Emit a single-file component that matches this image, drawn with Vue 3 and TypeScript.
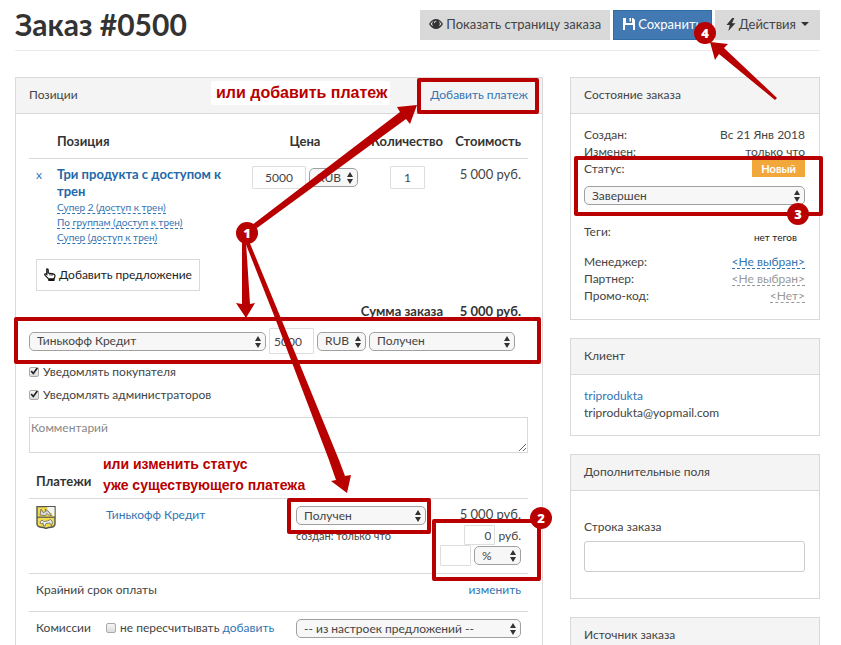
<script setup lang="ts">
import { ref } from 'vue'

interface Marker {
  n: number
  x: number
  y: number
}

interface Frame {
  x: number
  y: number
  w: number
  h: number
}

const offers: string[] = [
  'Супер 2 (доступ к трен)',
  'По группам (доступ к трен)',
  'Супер (доступ к трен)',
]

const frames: Frame[] = [
  { x: 419, y: 80, w: 118, h: 32 },
  { x: 16, y: 319, w: 523, h: 43 },
  { x: 289, y: 500, w: 140, h: 32 },
  { x: 434, y: 521, w: 105, h: 58 },
  { x: 576, y: 158, w: 245, h: 56 },
]

const arrows: string[] = [
  '252,225 400,112 397,107 417,105 410,124 406,119 257,228',
  '242,242 246,242 250,304 255,303 246,318 236,303 242,304',
  '245,242 249,241 280,316 339,460 345,476 351,475 347,493 331,481 336,480 329,460 275,318',
  '710,42 728,44 724,48 777,98 775,100 719,54 715,60',
]

const markers: Marker[] = [
  { n: 1, x: 247, y: 233 },
  { n: 2, x: 541, y: 518 },
  { n: 3, x: 798, y: 214 },
  { n: 4, x: 705, y: 33 },
]

const price = ref('5000')
const quantity = ref('1')
const paymentSum = ref('5000')
const fee = ref('0')
const feePercent = ref('')
const orderLine = ref('')
const comment = ref('')
const notifyBuyer = ref(true)
const notifyAdmins = ref(true)
const keepFees = ref(false)
</script>

<template>
  <div class="page">
    <header class="top">
      <h1>Заказ #0500</h1>
      <div class="actions">
        <button type="button" class="btn">
          <svg width="14" height="12" viewBox="0 0 14 12" aria-hidden="true">
            <path d="M0 6C2 2.600 4.300 1 7 1s5 1.600 7 5c-2 3.400-4.300 5-7 5S2 9.400 0 6Z" fill="#333" />
            <path d="M1.500 6C2.300 4.600 3.300 3.500 4.500 2.900a4 4 0 0 0 0 5.600C3.300 8 2.300 7.200 1.500 6Zm11 0c-.8-1.400-1.800-2.500-3-3.100a4 4 0 0 1 0 5.600c1.200-.5 2.200-1.300 3-2.500Z" fill="#d9d9d9" />
            <path d="M6.900 2.700c-1.100 0-1.900.9-1.900 2 0 .5.600.7.800.2.200-.8.600-1.100 1.200-1.300.6-.2.500-.9-.1-.9Z" fill="#d9d9d9" />
          </svg>
          Показать страницу заказа
        </button>
        <button type="button" class="btn primary">
          <svg width="12" height="12" viewBox="0 0 12 12" aria-hidden="true">
            <path d="M0 0h3v5h6V0h1l2 2v10H10V7H2v5H0ZM6.500 0h1.500v3.500H6.500Z" fill="#fff" />
          </svg>
          Сохранить
        </button>
        <button type="button" class="btn wide">
          <svg width="10" height="13" viewBox="0 0 10 13" aria-hidden="true">
            <path d="M6.200 0 .5 7h3.300L2.300 13 9.500 5.300H6L8.300 0Z" fill="#333" />
          </svg>
          Действия
          <span class="caret"></span>
        </button>
      </div>
    </header>

    <div class="columns">
      <main class="panel">
        <div class="panel-head">
          <h2>Позиции</h2>
          <a href="#add-payment">Добавить платеж</a>
        </div>
        <div class="order">
          <table class="items">
            <colgroup>
              <col class="c-del" /><col /><col class="c-price" /><col class="c-qty" /><col class="c-cost" />
            </colgroup>
            <thead>
              <tr>
                <th></th>
                <th class="left">Позиция</th>
                <th>Цена</th>
                <th class="right">Количество</th>
                <th class="right">Стоимость</th>
              </tr>
            </thead>
            <tbody>
              <tr>
                <td><a href="#remove">x</a></td>
                <td>
                  <a href="#offer" class="offer">Три продукта с доступом к трен</a>
                  <ul class="subs">
                    <li v-for="o in offers" :key="o"><a href="#sub">{{ o }}</a></li>
                  </ul>
                </td>
                <td>
                  <div class="price">
                    <input v-model="price" class="box center price-input" aria-label="Цена" />
                    <span class="pick cur">
                      <select aria-label="Валюта"><option>RUB</option></select>
                      <svg class="chev" width="6" height="12" viewBox="0 0 6 12"><path d="M3 0 6 5H0ZM3 12 0 7h6Z" /></svg>
                    </span>
                  </div>
                </td>
                <td class="mid"><input v-model="quantity" class="box center qty-input" aria-label="Количество" /></td>
                <td class="right money">5 000 руб.</td>
              </tr>
            </tbody>
          </table>

          <button type="button" class="add">
            <svg width="12" height="13" viewBox="0 0 12 13" aria-hidden="true">
              <path d="M3 .8c.8 0 1.200.5 1.200 1.200v3l4.800.8c1.200.2 2 .8 2 2 0 1.200-.6 2.200-1 3.200H4.500C3.600 9.500 1.800 8.300.8 7c-.4-.7.400-1.500 1.200-1l.8.6V2c0-.7-.2-1.200.2-1.200Z" fill="#fff" stroke="#111" stroke-width="1.200" />
              <path d="M6 5.500v2M8 5.800v2" stroke="#111" fill="none" />
              <path d="M4.300 10.500h6.200V13H4.300Z" fill="#111" />
            </svg>
            Добавить предложение
          </button>

          <div class="total">
            <b>Сумма заказа</b>
            <b class="sum">5 000 руб.</b>
          </div>

          <div class="pay-form">
            <span class="pick system">
              <select aria-label="Платежная система"><option>Тинькофф Кредит</option></select>
              <svg class="chev" width="6" height="12" viewBox="0 0 6 12"><path d="M3 0 6 5H0ZM3 12 0 7h6Z" /></svg>
            </span>
            <input v-model="paymentSum" class="box pay-input" aria-label="Сумма платежа" />
            <span class="pick cur">
              <select aria-label="Валюта платежа"><option>RUB</option></select>
              <svg class="chev" width="6" height="12" viewBox="0 0 6 12"><path d="M3 0 6 5H0ZM3 12 0 7h6Z" /></svg>
            </span>
            <span class="pick state">
              <select aria-label="Статус платежа"><option>Получен</option></select>
              <svg class="chev" width="6" height="12" viewBox="0 0 6 12"><path d="M3 0 6 5H0ZM3 12 0 7h6Z" /></svg>
            </span>
          </div>

          <div class="checks">
            <label><input v-model="notifyBuyer" type="checkbox" />Уведомлять покупателя</label>
            <label><input v-model="notifyAdmins" type="checkbox" />Уведомлять администраторов</label>
          </div>

          <textarea v-model="comment" placeholder="Комментарий" aria-label="Комментарий"></textarea>

          <table class="payments">
            <colgroup>
              <col class="p-icon" /><col /><col class="p-state" /><col class="p-sum" />
            </colgroup>
            <thead>
              <tr><th colspan="4" class="left">Платежи</th></tr>
            </thead>
            <tbody>
              <tr>
                <td>
                  <svg class="crest" width="20" height="23" viewBox="0 0 20 23" aria-hidden="true">
                    <path d="M1 .5h18v17.500c0 3-3.500 3.500-6.500 3.500L10 22.500 7.500 21.500C4.500 21.500 1 21 1 18Z" fill="#f2dc4e" stroke="#555" stroke-width="1.400" />
                    <path d="M11 1h7.500v9.500l-2-1-1-2.500-2.500-1Z" fill="#f4f4f4" />
                    <path d="m4 9 1-6 2 3.500 3-1L9 3l4 3 2.500 3.500-3-.5L11 7.500 9.500 9.500Z" fill="#ddd" stroke="#666" stroke-width=".8" />
                    <path d="M1 11.200h18" stroke="#555" stroke-width="1.200" />
                    <path d="m4 16 2-2 1.500 1.500 4-.5 3-1.500 2 2.500-1 4-1.500-3-4 .5-1 2.500H7.500l-.5-3-2 1Z" fill="#eee" stroke="#666" stroke-width=".8" />
                  </svg>
                </td>
                <td><a href="#payment">Тинькофф Кредит</a></td>
                <td>
                  <span class="pick fill">
                    <select aria-label="Статус"><option>Получен</option></select>
                    <svg class="chev" width="6" height="12" viewBox="0 0 6 12"><path d="M3 0 6 5H0ZM3 12 0 7h6Z" /></svg>
                  </span>
                  <small>создан: только что</small>
                </td>
                <td class="right money">
                  <div>5 000 руб.</div>
                  <label class="fee"><input v-model="fee" class="box fee-input" />руб.</label>
                  <div class="percent">
                    <input v-model="feePercent" class="box fee-input" aria-label="Комиссия" />
                    <span class="pick unit">
                      <select aria-label="Единица комиссии"><option>%</option></select>
                      <svg class="chev" width="6" height="12" viewBox="0 0 6 12"><path d="M3 0 6 5H0ZM3 12 0 7h6Z" /></svg>
                    </span>
                  </div>
                </td>
              </tr>
              <tr class="tall">
                <td colspan="3">Крайний срок оплаты</td>
                <td class="right"><a href="#edit">изменить</a></td>
              </tr>
              <tr class="tall">
                <td>Комиссии</td>
                <td>
                  <div class="keep">
                    <label><input v-model="keepFees" type="checkbox" />не пересчитывать</label>
                    <a href="#add-fee">добавить</a>
                  </div>
                </td>
                <td colspan="2">
                  <span class="pick fill">
                    <select aria-label="Настройка комиссий"><option>-- из настроек предложений --</option></select>
                    <svg class="chev" width="6" height="12" viewBox="0 0 6 12"><path d="M3 0 6 5H0ZM3 12 0 7h6Z" /></svg>
                  </span>
                </td>
              </tr>
            </tbody>
          </table>
        </div>
      </main>

      <aside>
        <section class="panel">
          <div class="panel-head"><h2>Состояние заказа</h2></div>
          <div class="panel-body details">
            <div class="line"><span>Создан:</span><span>Вс 21 Янв 2018</span></div>
            <div class="line"><span>Изменен:</span><span>только что</span></div>
            <div class="line"><span>Статус:</span><b class="badge">Новый</b></div>
            <span class="pick status">
              <select aria-label="Статус заказа"><option>Завершен</option></select>
              <svg class="chev" width="6" height="12" viewBox="0 0 6 12"><path d="M3 0 6 5H0ZM3 12 0 7h6Z" /></svg>
            </span>
            <div class="line tags"><span>Теги:</span><span class="no-tags">нет тегов</span></div>
            <div class="line"><span>Менеджер:</span><a href="#manager" class="dash">&lt;Не выбран&gt;</a></div>
            <div class="line"><span>Партнер:</span><a href="#partner" class="dash muted">&lt;Не выбран&gt;</a></div>
            <div class="line"><span>Промо-код:</span><a href="#promo" class="dash muted">&lt;Нет&gt;</a></div>
          </div>
        </section>
        <section class="panel">
          <div class="panel-head"><h2>Клиент</h2></div>
          <div class="panel-body">
            <div><a href="#client">triprodukta</a></div>
            <div>triprodukta@yopmail.com</div>
          </div>
        </section>
        <section class="panel">
          <div class="panel-head"><h2>Дополнительные поля</h2></div>
          <div class="panel-body field">
            <label for="order-line">Строка заказа</label>
            <input id="order-line" v-model="orderLine" />
          </div>
        </section>
        <section class="panel">
          <div class="panel-head"><h2>Источник заказа</h2></div>
          <div class="panel-body"></div>
        </section>
      </aside>
    </div>

    <p class="note note-add">или добавить платеж</p>
    <p class="note note-change">или изменить статус<br />уже существующего платежа</p>
    <svg class="marks" width="841" height="645" viewBox="0 0 841 645">
      <rect v-for="f in frames" :key="f.x" :x="f.x" :y="f.y" :width="f.w" :height="f.h" />
      <polygon v-for="a in arrows" :key="a" :points="a" />
      <g v-for="m in markers" :key="m.n">
        <circle :cx="m.x" :cy="m.y" r="11" />
        <text :x="m.x" :y="m.y + 5">{{ m.n }}</text>
      </g>
    </svg>
  </div>
</template>

<style>
body {
  margin: 0;
  background: #fff;
}
</style>

<style scoped>
.page {
  position: relative;
  box-sizing: border-box;
  height: 100vh;
  overflow: hidden;
  padding: 10px 21px 0 15px;
  font-family: Lato, "Open Sans", sans-serif;
  font-size: 12px;
  line-height: 17px;
  color: #444;
}
.page *,
.page *::before {
  box-sizing: border-box;
}
input,
select,
textarea,
button {
  margin: 0;
  font: inherit;
  color: inherit;
}
a {
  color: #3375b3;
  text-decoration: none;
}
h1,
h2,
p,
ul {
  margin: 0;
  padding: 0;
}
.top {
  display: flex;
  justify-content: space-between;
  padding-bottom: 10px;
  border-bottom: 1px solid #eaeaea;
  margin-bottom: 26px;
}
h1 {
  font-size: 30px;
  line-height: 28px;
  color: #333;
}
.actions {
  display: flex;
  gap: 3px;
}
.btn {
  display: flex;
  align-items: center;
  gap: 3px;
  height: 30px;
  padding: 0 9px 2px;
  border: 0;
  background: #d9d9d9;
  font-size: 13px;
}
.btn.primary {
  border: 1px solid #2e6da4;
  background: #4379b3;
  color: #fff;
}
.btn.wide {
  padding: 0 11px 2px;
}
.caret {
  margin-left: 2px;
  border: 4px solid transparent;
  border-top-color: #333;
  border-bottom: 0;
}
.columns {
  display: grid;
  grid-template-columns: minmax(0, 1fr) 250px;
  gap: 27px;
}
aside {
  display: flex;
  flex-direction: column;
  gap: 18px;
}
.panel {
  border: 1px solid #d9d9d9;
}
.panel-head {
  display: flex;
  justify-content: space-between;
  padding: 8px 14px 10px 13px;
  border-bottom: 1px solid #d9d9d9;
  background: #f4f4f4;
}
.panel-head h2 {
  font-size: 12px;
  font-weight: 400;
}
.panel-body {
  padding: 12px 14px 14px 13px;
}
.panel-body.details {
  padding-bottom: 15px;
}
.order {
  padding: 11px 14px 40px 13px;
}
table {
  width: 100%;
  border-collapse: collapse;
  table-layout: fixed;
}
th,
td {
  padding: 7px;
  text-align: left;
  vertical-align: top;
}
th {
  font-size: 13px;
  color: #333;
  text-align: center;
}
th.left {
  text-align: left;
}
th.right,
td.right {
  text-align: right;
}
.money {
  font-size: 13px;
}
thead th {
  border-bottom: 1px solid #d9d9d9;
  padding: 8px 7px;
}
.items th.right {
  padding-left: 0;
}
.c-del {
  width: 21px;
}
.c-price {
  width: 120px;
}
.c-qty {
  width: 85px;
}
.c-cost {
  width: 78px;
}
.items td:nth-child(3) {
  padding-right: 0;
}
.items td.mid {
  text-align: center;
}
.offer {
  display: block;
  font-size: 13px;
  font-weight: 700;
  color: #2368a8;
}
.subs {
  list-style: none;
  font-size: 10px;
  line-height: 15px;
}
.subs a {
  border-bottom: 1px dashed #3375b3;
}
.box {
  height: 23px;
  padding: 0 4px;
  border: 1px solid #ddd;
  border-radius: 1px;
  background: #fff;
}
.center {
  text-align: center;
}
.price {
  display: flex;
  align-items: center;
  gap: 3px;
}
.price-input {
  width: 54px;
}
.qty-input {
  width: 35px;
}
.pick {
  position: relative;
  display: block;
  font-size: 12px;
}
.pick select {
  appearance: none;
  display: block;
  width: 100%;
  height: 19px;
  padding: 0 12px 0 7px;
  border: 1px solid #a0a0a0;
  border-radius: 5px;
  background: #f7f7f7;
  line-height: 16px;
}
.chev {
  position: absolute;
  right: 5px;
  top: 4px;
  fill: #333;
  pointer-events: none;
}
.cur {
  flex: 0 0 49px;
}
.add {
  display: flex;
  align-items: center;
  gap: 3px;
  height: 32px;
  margin: 7px 0 0 7px;
  padding: 0 7px 2px;
  border: 1px solid #d9d9d9;
  background: #fff;
  font-size: 12px;
  color: #222;
}
.total {
  display: flex;
  justify-content: flex-end;
  padding: 12px 7px 0 0;
  font-size: 13px;
  color: #333;
}
.sum {
  width: 78px;
  text-align: right;
}
.pay-form {
  display: flex;
  align-items: center;
  gap: 3px;
  margin-top: 8px;
}
.system {
  flex: 0 0 237px;
}
.pay-input {
  width: 45px;
  height: 26px;
}
.state {
  flex: 0 0 146px;
}
.checks {
  display: flex;
  flex-direction: column;
  align-items: flex-start;
  gap: 6px;
  margin: 9px 0 14px;
}
.checks label,
.keep label {
  display: flex;
  align-items: center;
  gap: 4px;
}
input[type='checkbox'] {
  appearance: none;
  position: relative;
  flex: none;
  width: 10px;
  height: 10px;
  border: 1px solid #aaa;
  border-radius: 2px;
  background: linear-gradient(#f5f5f5, #ddd);
}
input[type='checkbox']:checked::before {
  content: '';
  display: block;
  height: 8px;
  background: #222;
  clip-path: polygon(6% 50%, 24% 36%, 40% 58%, 82% 0, 100% 14%, 42% 92%);
}
textarea {
  display: block;
  width: 100%;
  height: 36px;
  padding: 1px;
  border: 1px solid #d9d9d9;
  background: #fff;
}
textarea::placeholder {
  color: #888;
  opacity: 1;
}
.payments {
  margin-top: 12px;
}
.payments td {
  border-bottom: 1px solid #d9d9d9;
}
.p-icon {
  width: 70px;
}
.p-state {
  width: 144px;
}
.p-sum {
  width: 95px;
}
.crest {
  display: block;
}
.fill {
  width: 100%;
}
small {
  display: block;
  margin-top: 2px;
  font-size: 11px;
}
.fee,
.percent {
  display: flex;
  justify-content: flex-end;
  align-items: center;
  gap: 3px;
}
.fee {
  margin-top: 2px;
  font-size: 12px;
}
.fee-input {
  width: 31px;
  height: 20px;
  padding: 0 3px;
  text-align: right;
}
.percent .fee-input {
  height: 21px;
}
.unit {
  flex: 0 0 47px;
}
.payments td.right {
  padding-left: 0;
}
.payments .tall td {
  padding: 7px 7px 13px;
}
.payments .tall:last-child td {
  border-bottom: 0;
}
.keep {
  display: flex;
  gap: 3px;
}
.line {
  display: flex;
  justify-content: space-between;
}
.badge {
  padding: 0 9px;
  background: #f2a73b;
  color: #fff;
  font-size: 11px;
}
.status {
  margin: 9px 0 18px;
}
.tags {
  height: 30px;
}
.no-tags {
  padding: 6px 8px 0 0;
  font-size: 10px;
  color: #222;
}
.dash {
  height: 16px;
  border-bottom: 1px dashed #3375b3;
}
.dash.muted {
  color: #999;
  border-color: #999;
}
.panel-body.field {
  display: flex;
  flex-direction: column;
  gap: 6px;
  padding-top: 27px;
  padding-bottom: 26px;
}
.field input {
  width: 100%;
  height: 31px;
  padding: 0 8px;
  border: 1px solid #ccc;
  border-radius: 3px;
}
.marks {
  position: absolute;
  left: 0;
  top: 0;
  fill: #b80000;
  pointer-events: none;
}
.marks rect {
  fill: none;
  stroke: #b80000;
  stroke-width: 4;
  stroke-linejoin: round;
}
.marks text {
  fill: #fff;
  font-family: "Open Sans", sans-serif;
  font-size: 13px;
  font-weight: 800;
  text-anchor: middle;
}
.note {
  position: absolute;
  font-family: "Liberation Sans", sans-serif;
  font-weight: 700;
  color: #b80000;
}
.note-add {
  left: 211px;
  top: 81px;
  padding: 0 3px 0 5px;
  border-radius: 2px;
  background: #fff;
  font-size: 16px;
  line-height: 24px;
}
.note-change {
  left: 103px;
  top: 454px;
  font-size: 14px;
  line-height: 21px;
}
</style>
